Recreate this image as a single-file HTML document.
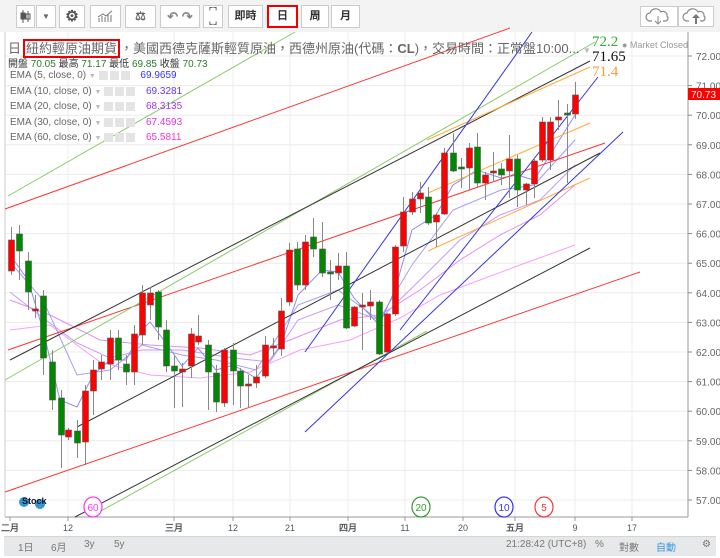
<!DOCTYPE html>
<html><head><meta charset="utf-8">
<style>
*{margin:0;padding:0;box-sizing:border-box}
body{width:720px;height:558px;background:#fff;font-family:"Liberation Sans","Noto Sans CJK TC",sans-serif;position:relative;overflow:hidden}
.tb{position:absolute;left:0;top:0;width:720px;height:32px;background:#f3f3f3}
.b{position:absolute;top:5px;height:23px;background:#fff;border:1px solid #ccc;font-size:11px;color:#333;text-align:center;line-height:21px;font-weight:bold}
.t{position:absolute;font-size:10px;color:#666;white-space:nowrap}
.bot{position:absolute;left:4px;top:536px;width:712px;height:20px;background:#e6e8ea;border-top:1px solid #d5d5d5}
.bot span{position:absolute;top:2px;font-size:10px;color:#777}
.ic{display:inline-block;width:9px;height:9px;background:#e4e4e4;margin-right:2px;vertical-align:middle}
</style></head><body>
<div class="tb"></div>
<div class="b" style="left:16px;width:19px">
<svg width="17" height="21"><g stroke="#555" fill="none"><line x1="6" y1="4" x2="6" y2="17"/><rect x="4" y="7" width="4" height="6" fill="#555"/><line x1="11" y1="5" x2="11" y2="16"/><rect x="9" y="8" width="4" height="5"/></g></svg></div>
<div class="b" style="left:36px;width:20px;color:#666;font-size:8px">▼</div>
<div class="b" style="left:59px;width:26px;font-size:15px;color:#555">⚙</div>
<div class="b" style="left:90px;width:31px"><svg width="29" height="21"><g stroke="#777" fill="none"><path d="M8 16V12M11 16V10M14 16V11M17 16V8M20 16V9M7 11L12 8L15 10L21 5"/></g></svg></div>
<div class="b" style="left:125px;width:31px;color:#666;font-size:12px">⚖</div>
<div class="b" style="left:160px;width:40px;color:#888;font-size:13px">↶ ↷</div>
<div class="b" style="left:203px;width:20px;font-size:9px;color:#666;line-height:10px">⌜⌝<br>⌞⌟</div>
<div class="b" style="left:228px;width:35px">即時</div>
<div class="b" style="left:267px;width:31px;border:2px solid #e00;line-height:19px">日</div>
<div class="b" style="left:301px;width:28px">周</div>
<div class="b" style="left:331px;width:29px">月</div>
<div class="b" style="left:640px;width:38px;top:6px;height:21px"><svg width="36" height="19"><path d="M11 14h-2a4 4 0 0 1 0-8a6 6 0 0 1 11-1a4 4 0 0 1 6 4a3 3 0 0 1-1 5h-3" fill="none" stroke="#888" stroke-width="1.2"/><path d="M17 9v8M14 14l3 3l3-3" stroke="#888" fill="none"/></svg></div>
<div class="b" style="left:678px;width:36px;top:6px;height:21px"><svg width="34" height="19"><path d="M10 14h-2a4 4 0 0 1 0-8a6 6 0 0 1 11-1a4 4 0 0 1 6 4a3 3 0 0 1-1 5h-3" fill="none" stroke="#888" stroke-width="1.2"/><path d="M16 17v-6h-3l4-4l4 4h-3v6z" fill="#777"/></svg></div>

<svg id="ch" width="720" height="558" style="position:absolute;left:0;top:0" xmlns="http://www.w3.org/2000/svg"></svg>

<div class="t" style="left:8px;top:38px;font-size:13px;color:#666">日<span style="border:2px solid #e00;padding:0 1px;margin-left:2px">紐約輕原油期貨</span>，美國西德克薩斯輕質原油，西德州原油(代碼：<b style="font-weight:bold">CL</b>)，交易時間：正常盤10:00... <span style="font-size:8px;color:#bbb">▼</span></div>
<div class="t" style="left:622px;top:40px;font-size:9px;color:#999">● Market Closed</div>
<div class="t" style="left:8px;top:55px;color:#333">開盤 <span style="color:#2a7a2a">70.05</span> 最高 <span style="color:#2a7a2a">71.17</span> 最低 <span style="color:#2a7a2a">69.85</span> 收盤 <span style="color:#2a7a2a">70.73</span></div>
<div class="t" style="left:10px;top:70px">EMA (5, close, 0) <span style="color:#bbb;font-size:7px">▼</span> <span class="ic"></span><span class="ic"></span><span class="ic"></span> <span style="color:#33f;margin-left:6px">69.9659</span></div>
<div class="t" style="left:10px;top:86px">EMA (10, close, 0) <span style="color:#bbb;font-size:7px">▼</span> <span class="ic"></span><span class="ic"></span><span class="ic"></span> <span style="color:#63f;margin-left:6px">69.3281</span></div>
<div class="t" style="left:10px;top:101px">EMA (20, close, 0) <span style="color:#bbb;font-size:7px">▼</span> <span class="ic"></span><span class="ic"></span><span class="ic"></span> <span style="color:#a3f;margin-left:6px">68.3135</span></div>
<div class="t" style="left:10px;top:117px">EMA (30, close, 0) <span style="color:#bbb;font-size:7px">▼</span> <span class="ic"></span><span class="ic"></span><span class="ic"></span> <span style="color:#d3e;margin-left:6px">67.4593</span></div>
<div class="t" style="left:10px;top:132px">EMA (60, close, 0) <span style="color:#bbb;font-size:7px">▼</span> <span class="ic"></span><span class="ic"></span><span class="ic"></span> <span style="color:#f3c;margin-left:6px">65.5811</span></div>

<div class="bot"><span style="left:14px">1日</span><span style="left:47px">6月</span><span style="left:80px">3y</span><span style="left:110px">5y</span>
<span style="left:502px">21:28:42 (UTC+8)</span><span style="left:591px">%</span><span style="left:615px">對數</span><span style="left:652px;color:#3399dd">自動</span><span style="left:698px">⚙</span></div>

<script>
var s='';
function L(x1,y1,x2,y2,c,w){s+='<line x1="'+x1+'" y1="'+y1+'" x2="'+x2+'" y2="'+y2+'" stroke="'+c+'" stroke-width="'+(w||1)+'"/>';}
function T(x,y,t,c,fs,a,ff,fw){s+='<text x="'+x+'" y="'+y+'" fill="'+c+'" font-size="'+fs+'" text-anchor="'+(a||'start')+'" font-family="'+(ff||'Liberation Sans')+'"'+(fw?' font-weight="bold"':'')+'>'+t+'</text>';}
for(var p=57;p<=72;p++){var y=56+(72-p)*29.6;L(5,y,688,y,'#ececec');L(688,y,692,y,'#888');T(696,y+4,p.toFixed(2),'#666',10);}
var gx=[68,174,233,290,348,405,463,515,575,632];gx.forEach(function(x){L(x,32,x,517,'#ececec');});
L(688,32,688,517,'#999');L(5,517,688,517,'#999');L(5,32,5,517,'#ccc');
var lab=[[10,'二月'],[68,'12'],[174,'三月'],[233,'12'],[290,'21'],[348,'四月'],[405,'11'],[463,'20'],[515,'五月'],[575,'9'],[632,'17']];
lab.forEach(function(l){T(l[0],531,l[1],'#555',9,'middle',null,/月/.test(l[1]));L(l[0],517,l[0],521,'#999');});
function P(pts,c){s+='<polyline fill="none" stroke="'+c+'" stroke-width="1" points="'+pts+'"/>';}
P('10,330 50,325 100,362 150,375 200,378 250,372 300,350 350,340 400,318 440,295 480,280 520,265 575,245','#f7a0f7');
P('10,300 50,315 100,340 150,345 200,348 250,355 290,340 340,320 380,315 420,290 460,260 500,235 540,215 575,185','#e08ef5');
P('10,292 43,318 77,343 110,358 142,350 182,350 233,358 270,362 298,320 338,305 379,320 420,280 460,240 500,215 540,200 575,165','#c59af8');
P('10,262 43,300 77,375 110,370 142,345 182,355 216,360 256,370 298,305 338,290 379,320 412,265 453,210 501,190 534,185 575,140','#a49cf8');
P('10,255 28,280 43,330 60,400 77,407 93,375 110,360 126,360 142,330 150,322 166,343 182,366 198,348 216,370 233,365 256,378 281,345 298,295 322,270 338,272 354,298 379,325 395,290 412,230 436,215 453,185 477,170 501,178 517,175 534,180 550,155 575,115','#8c8cf5');
L(5,209,510,28,'#f33');L(8,350,605,143,'#f33');L(5,492,640,272,'#f33');
L(8,196,295,32,'#8c6');L(5,380,595,42,'#8c6');L(90,517,427,331,'#8c6');
L(10,360,590,61,'#333');L(77,427,600,153,'#333');L(75,517,590,248,'#333');
L(427,140,590,67,'#fa3');L(428,193,590,123,'#fa3');L(428,251,590,178,'#fa3');
L(305,352,532,32,'#33e');L(305,432,623,132,'#33e');L(400,330,598,77,'#33e');
var C=[[11,240,271,227,275,'r'],[19,234,251,225,280,'g'],[28,261,292,252,310,'g'],[35,309,311,295,318,'r'],[43,296,358,290,375,'g'],[52,362,400,350,410,'g'],[61,398,435,390,468,'g'],[68,430,437,428,440,'r'],[77,431,443,420,458,'g'],[85,391,442,385,465,'r'],[93,370,391,360,415,'r'],[101,362,369,355,380,'r'],[110,338,364,330,380,'r'],[118,338,360,330,370,'g'],[126,364,372,355,385,'g'],[134,334,372,325,385,'r'],[142,293,335,285,345,'r'],[150,293,305,287,320,'r'],[158,292,327,290,340,'g'],[166,330,366,320,372,'g'],[174,366,371,355,408,'g'],[182,369,372,363,407,'r'],[191,334,366,328,378,'r'],[198,336,342,315,345,'r'],[208,345,372,340,410,'g'],[216,373,402,365,412,'g'],[224,350,403,348,407,'r'],[233,350,371,343,405,'g'],[240,371,386,368,408,'g'],[248,384,386,375,408,'r'],[256,377,383,365,388,'r'],[265,345,376,336,378,'r'],[273,346,348,338,355,'r'],[281,311,349,298,356,'r'],[289,250,302,243,306,'r'],[297,249,285,242,290,'g'],[305,242,285,235,290,'r'],[313,237,249,218,257,'g'],[322,249,273,222,277,'g'],[330,272,274,260,300,'g'],[338,266,273,253,280,'r'],[346,266,328,252,329,'g'],[354,307,326,306,327,'r'],[362,305,307,293,350,'r'],[370,302,306,290,320,'r'],[379,302,354,300,355,'g'],[387,314,352,313,353,'r'],[395,247,314,245,316,'r'],[403,212,246,197,252,'r'],[412,199,212,192,215,'r'],[420,193,199,182,213,'r'],[428,197,223,187,225,'g'],[436,215,222,213,247,'r'],[444,153,214,148,215,'r'],[453,153,171,133,172,'g'],[461,167,169,158,188,'g'],[469,148,168,143,190,'r'],[477,147,183,133,187,'g'],[485,175,183,172,200,'r'],[493,171,173,152,182,'r'],[501,169,175,163,185,'g'],[509,159,171,135,198,'r'],[517,159,190,155,207,'g'],[526,184,190,183,205,'r'],[534,161,184,157,198,'r'],[542,122,160,117,162,'r'],[550,122,160,117,170,'r'],[558,117,120,100,130,'r'],[567,113,115,104,183,'g'],[575,95,114,82,119,'r']];
C.forEach(function(c){L(c[0]+.5,c[3],c[0]+.5,c[4],'#888');var h=Math.max(2,c[2]-c[1]);s+='<rect x="'+(c[0]-2.5)+'" y="'+c[1]+'" width="6" height="'+h+'" fill="'+(c[5]=='r'?'#f00':'#080')+'" stroke="#555" stroke-width=".6"/>';});
T(592,46,'72.2','#3a3',15,'start','Liberation Serif');T(592,61,'71.65','#111',15,'start','Liberation Serif');T(592,76,'71.4','#f93',15,'start','Liberation Serif');
s+='<rect x="688" y="88" width="32" height="12" fill="#f00"/>';T(691,98,'70.73','#fff',10);
[[93,'60','#f3f'],[421,'20','#393'],[504,'10','#33e'],[544,'5','#f33']].forEach(function(m){s+='<ellipse cx="'+m[0]+'" cy="507" rx="9" ry="10" fill="#fff" stroke="'+m[2]+'" stroke-width="1.2"/>';T(m[0],511,m[1],m[2],10,'middle');});
s+='<circle cx="24" cy="502" r="5" fill="#39c"/><circle cx="40" cy="504" r="5" fill="#39c"/>';T(22,504,'Stock','#113',9,'start',null,1);
document.getElementById('ch').innerHTML=s;
</script>
</body></html>
